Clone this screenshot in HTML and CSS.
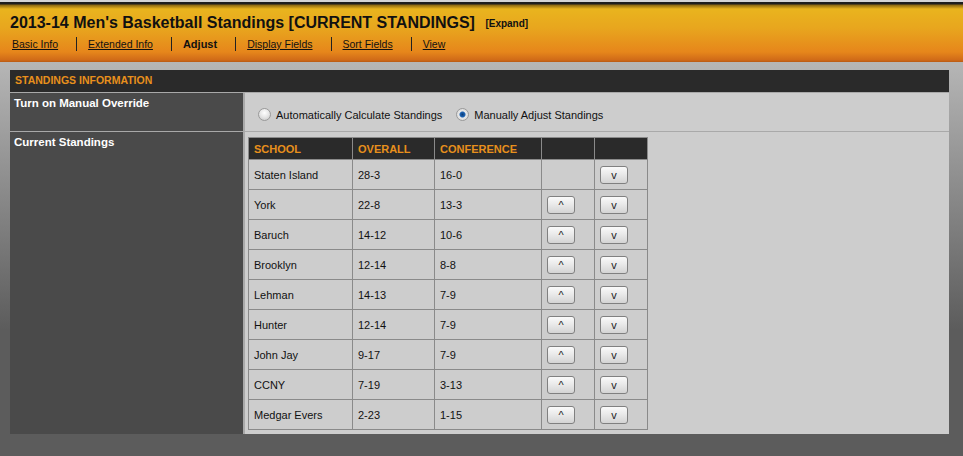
FILE: index.html
```html
<!DOCTYPE html>
<html lang="en">
<head>
  <meta charset="UTF-8" />
  <title>2013-14 Men's Basketball Standings</title>
  <link rel="stylesheet" href="styles.css">
</head>
<body>
  <header class="top-bar">
    <h1>2013-14 Men's Basketball Standings [CURRENT STANDINGS] <a class="expand" href="#">[Expand]</a></h1>
    <nav class="tabs">
      <a href="#">Basic Info</a><span class="sep"></span>
      <a href="#">Extended Info</a><span class="sep"></span>
      <b class="current">Adjust</b><span class="sep"></span>
      <a href="#">Display Fields</a><span class="sep"></span>
      <a href="#">Sort Fields</a><span class="sep"></span>
      <a href="#">View</a>
    </nav>
  </header>

  <main class="panel">
    <div class="panel-title">STANDINGS INFORMATION</div>

    <div class="label">Turn on Manual Override</div>
    <div class="field radios">
      <label><input type="radio" name="mode" /> Automatically Calculate Standings</label>
      <label><input type="radio" name="mode" checked /> Manually Adjust Standings</label>
    </div>

    <div class="label">Current Standings</div>
    <div class="field">
      <table class="standings">
        <thead>
          <tr><th class="c-school">SCHOOL</th><th class="c-overall">OVERALL</th><th class="c-conf">CONFERENCE</th><th class="c-btn"></th><th class="c-btn"></th></tr>
        </thead>
        <tbody id="rows"></tbody>
      </table>
    </div>
  </main>

  <script>
    const teams = [
      ["Staten Island", "28-3", "16-0"],
      ["York", "22-8", "13-3"],
      ["Baruch", "14-12", "10-6"],
      ["Brooklyn", "12-14", "8-8"],
      ["Lehman", "14-13", "7-9"],
      ["Hunter", "12-14", "7-9"],
      ["John Jay", "9-17", "7-9"],
      ["CCNY", "7-19", "3-13"],
      ["Medgar Evers", "2-23", "1-15"]
    ];

    const tbody = document.getElementById("rows");
    teams.forEach((t, i) => {
      const tr = document.createElement("tr");
      t.forEach(col => {
        const td = document.createElement("td");
        td.textContent = col;
        tr.appendChild(td);
      });
      // first place can't move up, so it only gets the down button
      const up = document.createElement("td");
      up.className = "btn-cell";
      if (i > 0) up.innerHTML = '<button class="move">^</button>';
      const down = document.createElement("td");
      down.className = "btn-cell";
      down.innerHTML = '<button class="move">v</button>';
      tr.appendChild(up);
      tr.appendChild(down);
      tbody.appendChild(tr);
    });
  </script>
</body>
</html>
```

FILE: styles.css
```css
body {
  margin: 0;
  font-family: "Liberation Sans", Arial, sans-serif;
  color: #111;
  min-height: 456px;
  background: linear-gradient(to bottom, #b6b6b6 62px, #5c5c5c 330px) no-repeat, #5c5c5c;
}
.top-bar {
  height: 62px;
  box-sizing: border-box;
  padding: 13px 0 0 10px;
  background: linear-gradient(to bottom, #d4d4d4 0, #d4d4d4 2px, #1e1e1e 2px, #1e1e1e 4px, #8a6612 5px, #e9b41e 9px, #e8a61e 28px, #e6861b 52px, #d06a18 60px, #b85a14 62px);
}
.top-bar h1 {
  margin: 0;
  font-size: 16px;
  line-height: 19px;
  font-weight: bold;
  color: #111;
  white-space: nowrap;
}
.expand {
  font-size: 10px;
  color: #111;
  text-decoration: none;
  margin-left: 6px;
  vertical-align: 1px;
}
.tabs {
  display: flex;
  align-items: center;
  margin-top: 4px;
  padding-left: 2px;
  font-size: 10.5px;
}
.tabs a {
  color: #111;
  text-decoration: underline;
}
.tabs .current {
  font-weight: bold;
  font-size: 11px;
}
.tabs .sep {
  width: 1px;
  height: 14px;
  background: #222;
  margin: 0 11px 0 18px;
}
.panel {
  margin: 8px 14px 0 10px;
  display: grid;
  grid-template-columns: 233px 1fr;
  column-gap: 2px;
  row-gap: 1px;
  background: #a9a9a9;
}
.panel-title {
  grid-column: 1 / 3;
  background: #2a2a2a;
  color: #e8901c;
  font-size: 10.5px;
  font-weight: bold;
  height: 22px;
  line-height: 21px;
  padding-left: 5px;
}
.label {
  background: #4a4a4a;
  color: #fff;
  font-size: 11.5px;
  font-weight: bold;
  padding: 4px 4px 0 4px;
}
.field {
  background: #cdcdcd;
}
.radios {
  height: 38px;
  display: flex;
  align-items: flex-end;
  padding: 0 0 10px 11px;
  box-sizing: border-box;
  font-size: 11px;
}
.radios label {
  display: flex;
  align-items: center;
  margin-right: 12px;
}
.radios input {
  appearance: none;
  -webkit-appearance: none;
  margin: 0 5px 0 2px;
  width: 13px;
  height: 13px;
  border-radius: 50%;
  border: 1px solid #9a9a9a;
  box-sizing: border-box;
  background: radial-gradient(circle at 50% 35%, #ffffff 0, #e8e8e8 45%, #c4c4c4 100%);
}
.radios input:checked {
  background: radial-gradient(circle at 50% 50%, #0a3c78 0, #1e64b4 2.5px, #e8e8e8 3.5px, #d0d0d0 100%);
}
.standings {
  border-collapse: collapse;
  margin: 5px 0 4px 3px;
  font-size: 11px;
}
.standings th, .standings td {
  border: 1px solid #8a8a8a;
  text-align: left;
  padding: 0 0 0 5px;
}
.standings th {
  background: #2a2a2a;
  color: #e8901c;
  height: 20px;
  padding-top: 1px;
  font-weight: bold;
}
.standings td {
  height: 29px;
}
.c-school { width: 98px; }
.c-overall { width: 76px; }
.c-conf { width: 101px; }
.c-btn { width: 47px; }
.standings td.btn-cell {
  padding: 0 0 0 5px;
}
.move {
  width: 28px;
  height: 18px;
  padding: 0;
  font-family: "Liberation Sans", Arial, sans-serif;
  font-size: 11px;
  color: #222;
  border: 1px solid #808080;
  border-radius: 3px;
  background: linear-gradient(to bottom, #fafafa, #e6e6e6 55%, #d4d4d4);
  display: block;
}
```
